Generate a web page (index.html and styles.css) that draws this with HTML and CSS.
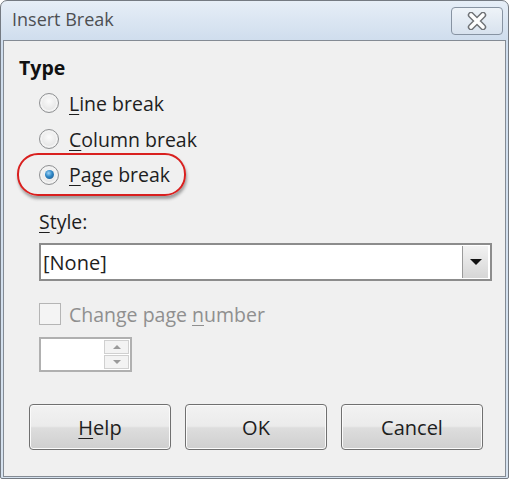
FILE: index.html
```html
<!DOCTYPE html>
<html lang="en">
  <head>
    <meta charset="UTF-8" />
    <meta name="viewport" content="width=device-width, initial-scale=1.0" />
    <title>Insert Break</title>
    <link rel="stylesheet" href="styles.css">
  </head>
  <body>
    <div class="window">
      <div class="titlebar">
        <span class="title">Insert Break</span>
        <button type="button" class="close" aria-label="Close">
          <svg width="26" height="18" viewBox="0 0 26 18">
            <path d="M7 3 L19 15 M19 3 L7 15" stroke="#6f7276" stroke-width="6.4" stroke-linecap="round" />
            <path d="M7 3 L19 15 M19 3 L7 15" stroke="#ffffff" stroke-width="3.6" stroke-linecap="round" />
          </svg>
        </button>
      </div>
      <div class="content">
        <h1 class="heading">Type</h1>
        <div class="radios">
          <label class="radio-row">
            <span class="radio"></span>
            <span><u>L</u>ine break</span>
          </label>
          <label class="radio-row">
            <span class="radio"></span>
            <span><u>C</u>olumn break</span>
          </label>
          <label class="radio-row highlight">
            <span class="radio checked"></span>
            <span><u>P</u>age break</span>
          </label>
        </div>
        <div class="field">
          <div class="field-label"><u>S</u>tyle:</div>
          <div class="select">
            <span class="select-value">[None]</span>
            <span class="select-btn"><span class="arrow"></span></span>
          </div>
          <label class="check-row">
            <span class="checkbox"></span>
            <span>Change page <u>n</u>umber</span>
          </label>
          <div class="spin">
            <span class="spin-field"></span>
            <span class="spin-btns">
              <span class="spin-btn"><span class="tri up"></span></span>
              <span class="spin-btn"><span class="tri down"></span></span>
            </span>
          </div>
        </div>
        <div class="buttons">
          <button type="button" class="btn"><u>H</u>elp</button>
          <button type="button" class="btn">OK</button>
          <button type="button" class="btn">Cancel</button>
        </div>
      </div>
    </div>
  </body>
</html>
```

FILE: styles.css
```css
*,
*::before,
*::after {
  box-sizing: border-box;
}
* {
  margin: 0;
}
body {
  width: 511px;
  height: 479px;
  background-color: #ffffff;
  font-family: "Open Sans", "Noto Sans", sans-serif;
  font-size: 19.5px;
  color: #1e1e1e;
}
u {
  text-decoration-thickness: 1px;
  text-underline-offset: 3px;
}

.window {
  width: 509px;
  height: 479px;
  display: flex;
  flex-direction: column;
  border: 1px solid #747a82;
  border-radius: 7px 7px 2px 2px;
  background: linear-gradient(#e6eef7, #cfdded 40px, #d6e2ef);
  padding: 0 2px 1px 2px;
}

.titlebar {
  height: 39px;
  display: flex;
  align-items: center;
  justify-content: space-between;
  padding: 0 3px 4px 9px;
}
.title {
  font-size: 18px;
  color: #4d4f52;
}
.close {
  width: 52px;
  height: 28px;
  margin-top: 4px;
  display: flex;
  align-items: center;
  justify-content: center;
  border: 1px solid #8793a2;
  border-radius: 4px;
  background: linear-gradient(#eef3f8, #d8e2ee);
  padding: 0;
}

.content {
  flex: 1;
  border: 1px solid #848b94;
  background-color: #f0f0f0;
  padding: 15px 0 0 15px;
  display: flex;
  flex-direction: column;
}

.heading {
  font-size: 19.5px;
  font-weight: 700;
  line-height: 24px;
  height: 24px;
  color: #111111;
}

.radios {
  margin-top: 5px;
  padding-left: 20px;
  display: flex;
  flex-direction: column;
}
.radio-row {
  height: 36px;
  display: flex;
  align-items: center;
  gap: 10px;
  align-self: flex-start;
}
.radio {
  width: 20px;
  height: 20px;
  border-radius: 50%;
  border: 1px solid #8f9193;
  background: radial-gradient(circle at 50% 40%, #fbfbfb 0, #e9e9e9 55%, #d2d2d2 100%);
  box-shadow: inset 0 0 0 2px #f3f3f3;
  display: flex;
  align-items: center;
  justify-content: center;
}
.radio.checked::after {
  content: "";
  width: 9px;
  height: 9px;
  border-radius: 50%;
  background: radial-gradient(circle at 40% 35%, #9ed3f5 0, #2d86c6 45%, #1c4f7d 100%);
}
.highlight {
  margin-left: -22px;
  padding: 0 14px 0 20px;
  height: 43px;
  margin-top: -4px;
  margin-bottom: -3px;
  border: 2px solid #d9201f;
  border-radius: 21px;
  box-shadow: 1px 3px 3px rgba(60, 60, 60, 0.45);
}

.field {
  padding-left: 20px;
  display: flex;
  flex-direction: column;
}
.field-label {
  margin-top: 17px;
  line-height: 24px;
  height: 24px;
}
.select {
  margin-top: 9px;
  width: 453px;
  height: 38px;
  border: 2px solid #8c8c8c;
  background-color: #ffffff;
  display: flex;
  align-items: center;
  justify-content: space-between;
  padding: 0 2px 0 2px;
}
.select-value {
  font-size: 20px;
}
.select-btn {
  width: 26px;
  height: 32px;
  border-left: 1px solid #9a9a9a;
  background: linear-gradient(#f2f2f2, #d6d6d6);
  display: flex;
  align-items: center;
  justify-content: center;
}
.arrow {
  width: 0;
  height: 0;
  border-left: 6px solid transparent;
  border-right: 6px solid transparent;
  border-top: 6px solid #111111;
}

.check-row {
  margin-top: 22px;
  height: 22px;
  display: flex;
  align-items: center;
  gap: 8px;
  color: #8f8f8f;
}
.checkbox {
  width: 22px;
  height: 22px;
  border: 1px solid #b5b5b5;
  background-color: #f4f4f4;
}

.spin {
  margin-top: 12px;
  width: 93px;
  height: 35px;
  border: 2px solid #b0b0b0;
  background-color: #ffffff;
  display: flex;
  justify-content: space-between;
  padding: 1px 1px 1px 0;
}
.spin-btns {
  width: 25px;
  display: flex;
  flex-direction: column;
  gap: 1px;
}
.spin-btn {
  flex: 1;
  border: 1px solid #d0d0d0;
  background-color: #f3f3f3;
  display: flex;
  align-items: center;
  justify-content: center;
}
.tri {
  width: 0;
  height: 0;
  border-left: 4px solid transparent;
  border-right: 4px solid transparent;
}
.tri.up {
  border-bottom: 4px solid #9a9a9a;
}
.tri.down {
  border-top: 4px solid #9a9a9a;
}

.buttons {
  margin-top: 32px;
  padding-left: 10px;
  display: flex;
  gap: 14px;
}
.btn {
  width: 142px;
  height: 46px;
  border: 1px solid #707070;
  border-radius: 4px;
  background: linear-gradient(#f2f2f2 0, #ebebeb 48%, #dddddd 52%, #cfcfcf 100%);
  box-shadow: inset 0 0 0 1px #fbfbfb;
  font-family: "Open Sans", "Noto Sans", sans-serif;
  font-size: 20px;
  color: #1e1e1e;
}
```
